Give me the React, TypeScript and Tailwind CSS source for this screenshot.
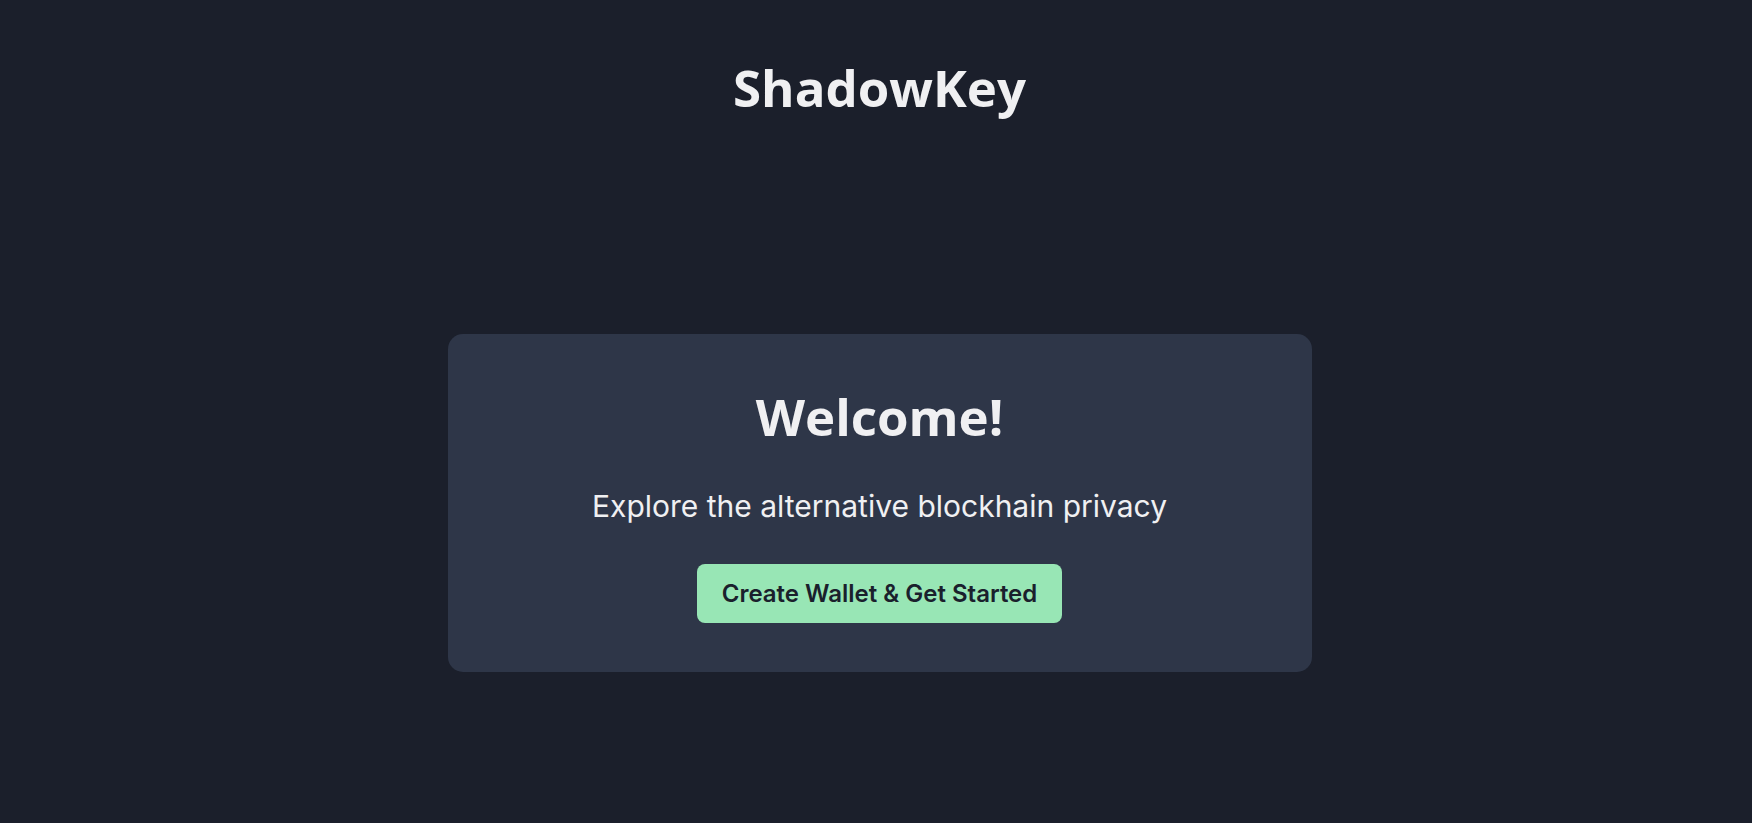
const Welcome = () => {
  return (
    <div className="min-h-screen bg-[#1b1f2b] text-[#f0f0f2] flex flex-col items-center pl-[7px]">
      <h1 className="pt-[57px] text-[51px] leading-[60px] font-bold font-['Open_Sans',sans-serif]">
        ShadowKey
      </h1>

      <div className="mt-[217px] w-[864px] h-[338px] rounded-[15px] bg-[#2e3648] flex flex-col items-center pt-[52px]">
        <h2 className="text-[51px] leading-[60px] font-bold font-['Open_Sans',sans-serif]">Welcome!</h2>
        <p className="mt-[42px] text-[30px] leading-[36px] font-['Inter',sans-serif]">
          Explore the alternative blockhain privacy
        </p>
        <button className="mt-[40px] h-[59px] px-[25px] rounded-lg bg-[#98e6b5] text-[#1a202c] text-[24px] font-semibold font-['Inter',sans-serif]">
          Create Wallet &amp; Get Started
        </button>
      </div>
    </div>
  );
};

export default function App() {
  return <Welcome />;
}
